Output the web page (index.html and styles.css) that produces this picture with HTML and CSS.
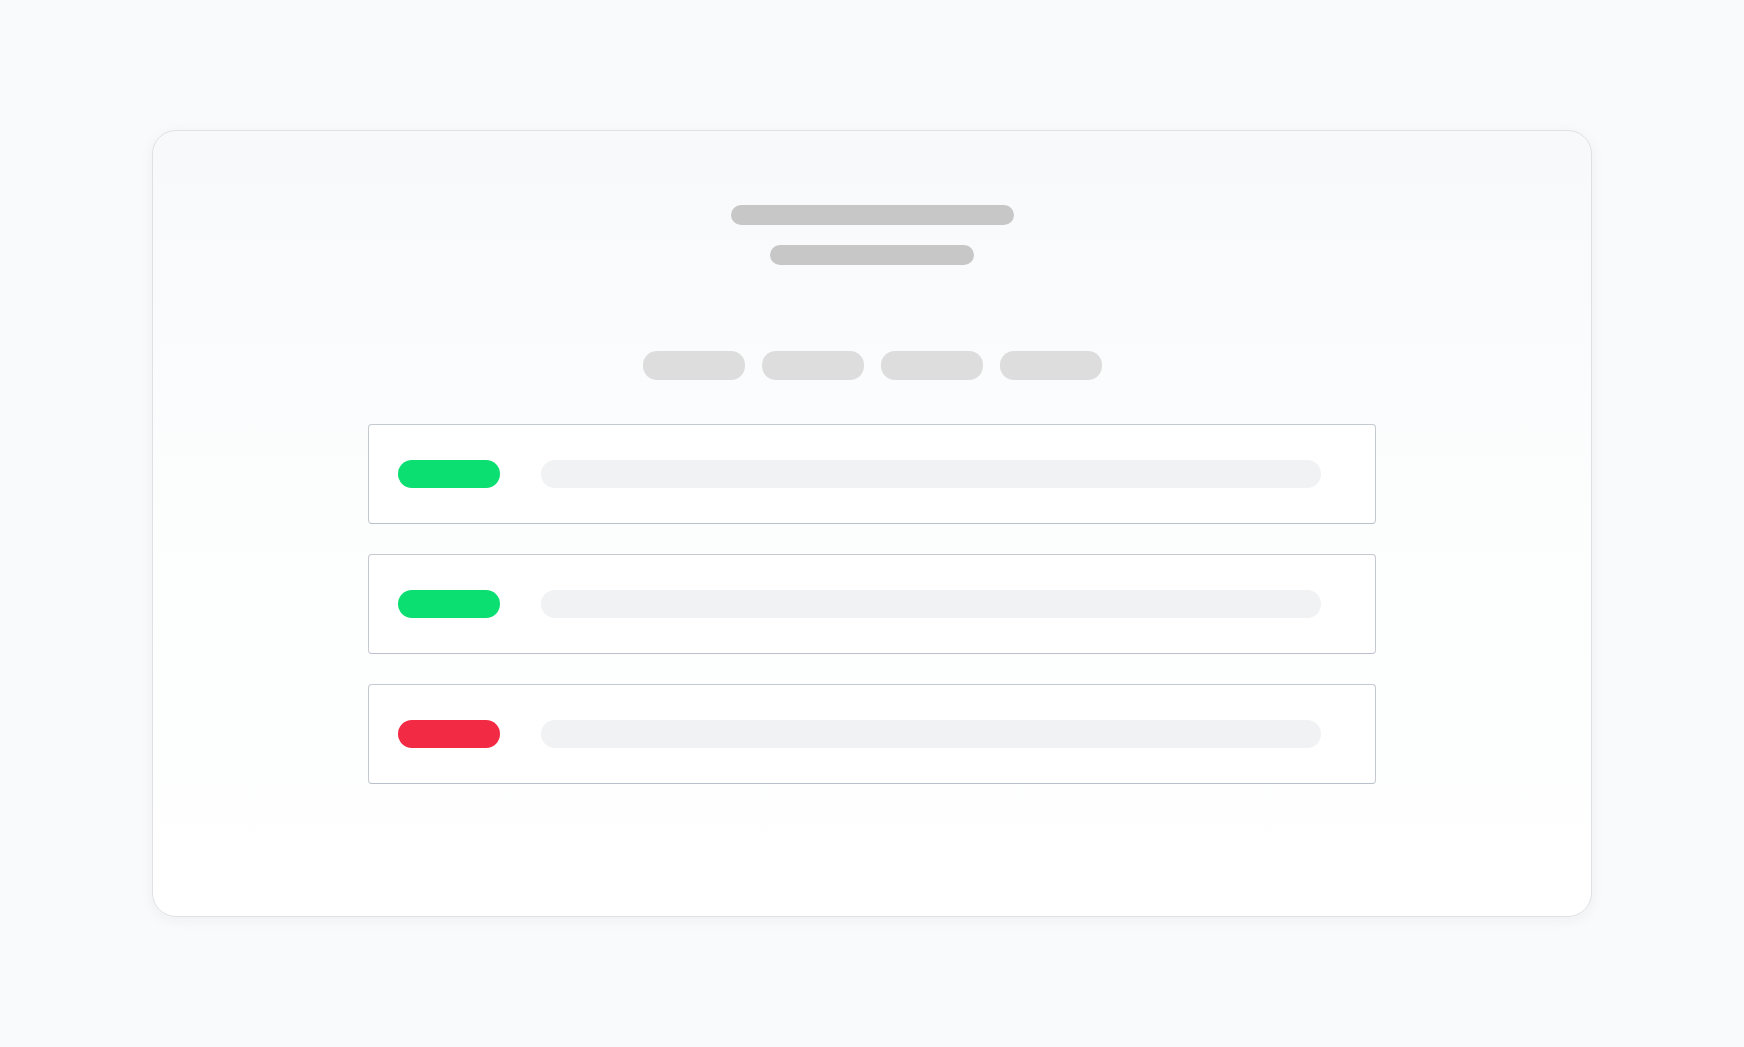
FILE: index.html
```html
<!DOCTYPE html>
<html lang="en">
<head>
<meta charset="utf-8">
<title>Status list</title>
<link rel="stylesheet" href="styles.css">
</head>
<body>
<main class="page">
  <section class="card">
    <div class="title-bar"></div>
    <div class="subtitle-bar"></div>
    <div class="tabs">
      <span class="tab"></span>
      <span class="tab"></span>
      <span class="tab"></span>
      <span class="tab"></span>
    </div>
    <div class="rows">
      <div class="row"><span class="status status-ok"></span><span class="line"></span></div>
      <div class="row"><span class="status status-ok"></span><span class="line"></span></div>
      <div class="row"><span class="status status-bad"></span><span class="line"></span></div>
    </div>
  </section>
</main>
</body>
</html>
```
FILE: styles.css
```css
html, body {
  margin: 0;
  padding: 0;
  background: #f9fafb;
  font-family: "Inter", "Liberation Sans", sans-serif;
}
.page {
  height: 1047px;
  padding-top: 130px;
  box-sizing: border-box;
  display: flex;
  justify-content: center;
}
.card {
  width: 1440px;
  height: 787px;
  box-sizing: border-box;
  border: 1px solid #dfe1e5;
  border-radius: 24px;
  background: linear-gradient(180deg, #f8f9fb 0%, #fcfdfd 45%, #ffffff 100%);
  box-shadow: 0 3px 14px rgba(20, 30, 50, 0.05);
  display: flex;
  flex-direction: column;
  align-items: center;
  padding-top: 74px;
}
.title-bar {
  width: 283px;
  height: 20px;
  border-radius: 10px;
  background: #c7c7c7;
}
.subtitle-bar {
  width: 204px;
  height: 20px;
  border-radius: 10px;
  background: #c7c7c7;
  margin-top: 20px;
}
.tabs {
  display: flex;
  gap: 17px;
  margin-top: 86px;
}
.tab {
  display: block;
  width: 102px;
  height: 29px;
  border-radius: 14px;
  background: #dddddd;
}
.rows {
  display: flex;
  flex-direction: column;
  gap: 30px;
  margin-top: 44px;
}
.row {
  width: 1008px;
  height: 100px;
  box-sizing: border-box;
  border: 1px solid #c5c9d0;
  border-bottom-color: #bac0cb;
  border-radius: 4px;
  background: #ffffff;
  display: flex;
  align-items: center;
  padding-left: 29px;
}
.status {
  display: block;
  width: 102px;
  height: 28px;
  border-radius: 14px;
}
.status-ok { background: #0bdf72; }
.status-bad { background: #f32a44; }
.line {
  display: block;
  width: 780px;
  height: 28px;
  border-radius: 14px;
  background: #f1f2f4;
  margin-left: 41px;
}
```
